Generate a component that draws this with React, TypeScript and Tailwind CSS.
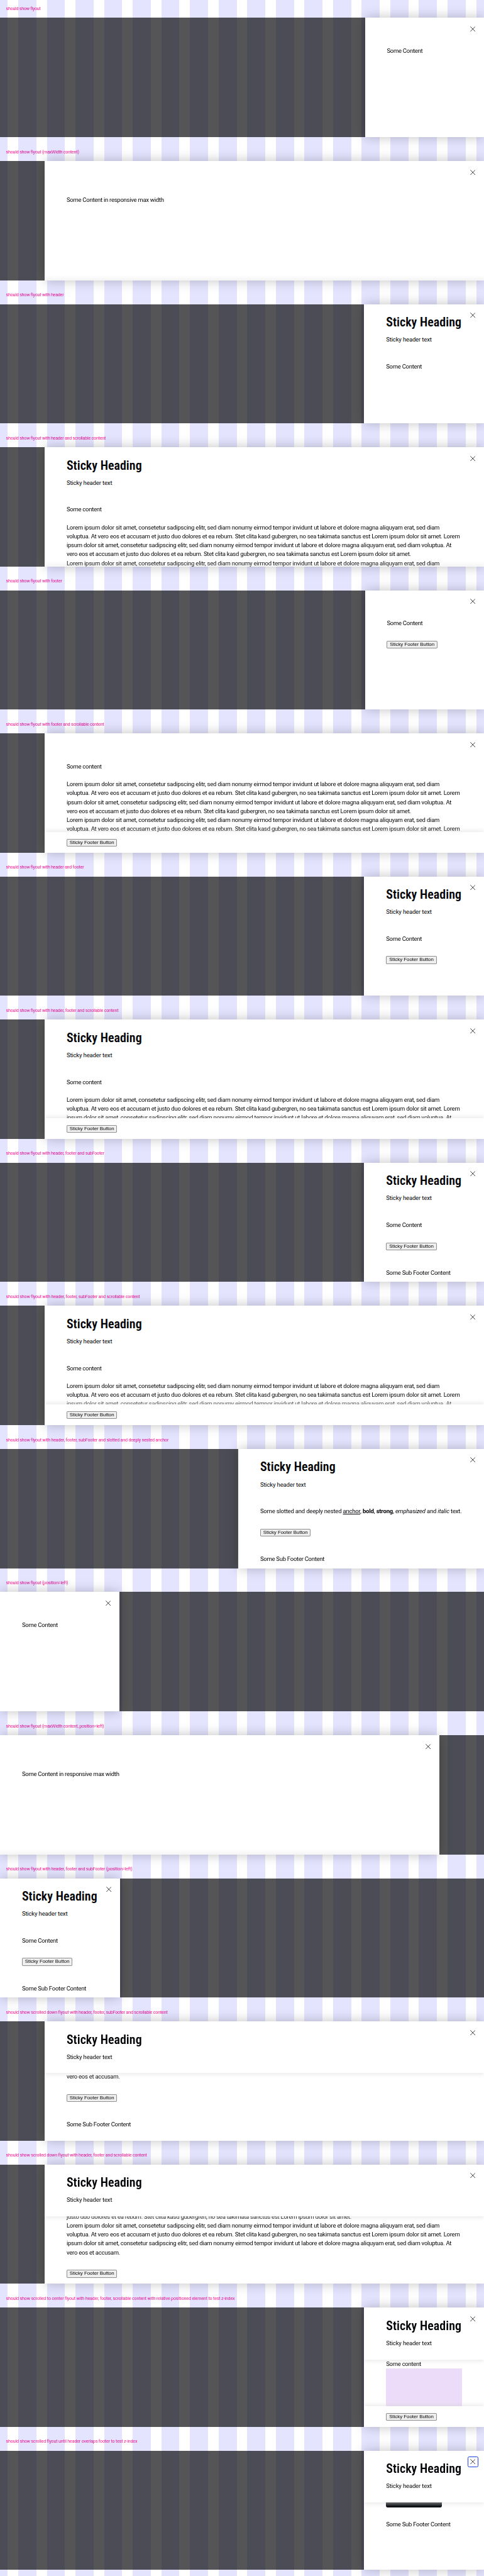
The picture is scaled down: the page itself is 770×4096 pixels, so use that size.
import type { ReactNode } from "react";

type FlyoutProps = {
  label: string;
  labelTracking?: string;
  side?: "left" | "right";
  width: string;
  header?: boolean;
  headerShadow?: boolean;
  footer?: boolean;
  bottomFade?: boolean;
  focused?: boolean;
  children: ReactNode;
};

const LINE_1 =
  "Lorem ipsum dolor sit amet, consetetur sadipscing elitr, sed diam nonumy eirmod tempor invidunt ut labore et dolore magna aliquyam erat, sed diam";
const LINE_2 =
  "voluptua. At vero eos et accusam et justo duo dolores et ea rebum. Stet clita kasd gubergren, no sea takimata sanctus est Lorem ipsum dolor sit amet. Lorem";
const LINE_3 =
  "ipsum dolor sit amet, consetetur sadipscing elitr, sed diam nonumy eirmod tempor invidunt ut labore et dolore magna aliquyam erat, sed diam voluptua. At";
const LINE_4 =
  "vero eos et accusam et justo duo dolores et ea rebum. Stet clita kasd gubergren, no sea takimata sanctus est Lorem ipsum dolor sit amet.";

function Close({ focused }: { focused?: boolean }) {
  return (
    <button
      aria-label="Close"
      className={
        "absolute top-[9.48px] right-[9.48px] z-20 flex size-[16.6px] items-center justify-center rounded-[2.4px] " +
        (focused ? "outline-[1.2px] -outline-offset-[1.2px] outline-[#1a44ea]" : "")
      }
    >
      <svg viewBox="0 0 14 14" className="size-[8.4px] shrink-0">
        <path d="M.5.5l13 13M13.5.5l-13 13" stroke="#010205" strokeWidth="1.25" fill="none" />
      </svg>
    </button>
  );
}

function FooterButton() {
  return (
    <button className="block h-[12.4px] w-[80.6px] rounded-[1.8px] border border-[#767676]/80 bg-[#efefef] text-center font-['Liberation_Sans',sans-serif] text-[7.9px] leading-[10.6px] font-normal tracking-[-0.015px] whitespace-nowrap text-black">
      Sticky Footer Button
    </button>
  );
}

function Header({ shadow }: { shadow?: boolean }) {
  return (
    <div
      className={
        "relative z-10 h-[82.37px] shrink-0 bg-white pt-[17.5px] pl-[34.9px] " +
        (shadow ? "shadow-[0_3px_6px_rgba(204,204,204,0.35)]" : "")
      }
    >
      <h2 className="text-[19.9px] leading-[23.7px] font-semibold tracking-[0.05px] [font-stretch:75%]">
        Sticky Heading
      </h2>
      <p className="mt-[8.4px] tracking-[-0.13px]">Sticky header text</p>
    </div>
  );
}

function SubFooter() {
  return <p className="mt-[28.9px]">Some Sub Footer Content</p>;
}

function Footer() {
  return (
    <div className="mt-[20.3px]">
      <FooterButton />
    </div>
  );
}

function Lorem({ lines }: { lines: string[] }) {
  return (
    <div>
      {lines.map((line, i) => (
        <p key={i} className={line === LINE_1 ? "tracking-[-0.203px]" : "tracking-[-0.222px]"}>
          {line}
        </p>
      ))}
    </div>
  );
}

function Flyout({
  label,
  labelTracking = "tracking-[-0.215px]",
  side = "right",
  width,
  header,
  headerShadow,
  footer,
  bottomFade,
  focused,
  children,
}: FlyoutProps) {
  return (
    <section className="h-[227.556px] shrink-0">
      <div className="flex h-[28.444px] items-center pl-[9.6px]">
        <p
          className={
            "relative z-10 text-[7.11px] whitespace-nowrap text-[#ff1493] mix-blend-multiply " + labelTracking
          }
        >
          {label}
        </p>
      </div>
      <div className={"flex h-[189.63px] bg-[#010205]/67 " + (side === "right" ? "justify-end" : "justify-start")}>
        <div className={"relative flex h-full flex-col bg-white shadow-[0_0_18px_rgba(0,0,0,0.25)] " + width}>
          <Close focused={focused} />
          <div className="flex h-full flex-col overflow-hidden">
            {header && <Header shadow={headerShadow} />}
            <div
              className={
                "min-h-0 flex-1 pl-[34.9px] " +
                (header ? (headerShadow ? "" : "pt-[9.9px]") : "pt-[45.6px]")
              }
            >
              {children}
            </div>
            {footer && (
              <div className="relative h-[33.2px] shrink-0 bg-white pt-[11.3px] pl-[34.9px] shadow-[0_-3px_6px_rgba(204,204,204,0.35)]">
                <FooterButton />
              </div>
            )}
            {bottomFade && <div className="relative h-0 shrink-0 shadow-[0_-1px_6px_2px_rgba(204,204,204,0.35)]" />}
          </div>
        </div>
      </div>
    </section>
  );
}

const SMALL = "w-[189.5px]";
const HEADED = "w-[190.7px]";
const WIDE = "w-[699px]";

export default function App() {
  return (
    <div className="flex h-[4096px] w-[770px] flex-col overflow-hidden bg-[repeating-linear-gradient(90deg,#e4e4ff_0px,#e4e4ff_12.29px,#ffffff_12.29px,#ffffff_29.02px,#e4e4ff_29.02px,#e4e4ff_45.534px)] font-[Roboto,sans-serif] text-[9.48px] leading-[14.222px] tracking-[-0.25px] whitespace-nowrap text-[#010205]">
      <Flyout label="should show flyout" labelTracking="tracking-[-0.26px]" width={SMALL}>
        <p>Some Content</p>
      </Flyout>

      <Flyout label="should show flyout (maxWidth content)" width={WIDE} bottomFade>
        <p className="mt-[9.5px]">Some Content in responsive max width</p>
      </Flyout>

      <Flyout label="should show flyout with header" width={HEADED} header>
        <p>Some Content</p>
      </Flyout>

      <Flyout label="should show flyout with header and scrollable content" width={WIDE} header bottomFade>
        <p className="mb-[14.22px]">Some content</p>
        <Lorem lines={[LINE_1, LINE_2, LINE_3, LINE_4, LINE_1]} />
      </Flyout>

      <Flyout label="should show flyout with footer" width={SMALL}>
        <p>Some Content</p>
        <Footer />
      </Flyout>

      <Flyout label="should show flyout with footer and scrollable content" width={WIDE} footer>
        <p className="mb-[14.22px]">Some content</p>
        <Lorem lines={[LINE_1, LINE_2, LINE_3, LINE_4, LINE_1, LINE_2]} />
      </Flyout>

      <Flyout label="should show flyout with header and footer" width={HEADED} header>
        <p>Some Content</p>
        <Footer />
      </Flyout>

      <Flyout label="should show flyout with header, footer and scrollable content" width={WIDE} header footer>
        <p className="mb-[14.22px]">Some content</p>
        <Lorem lines={[LINE_1, LINE_2, LINE_3]} />
      </Flyout>

      <Flyout label="should show flyout with header, footer and subFooter" width={HEADED} header>
        <p>Some Content</p>
        <Footer />
        <SubFooter />
      </Flyout>

      <Flyout
        label="should show flyout with header, footer, subFooter and scrollable content"
        labelTracking="tracking-[-0.19px]"
        width={WIDE}
        header
        footer
      >
        <p className="mb-[14.22px]">Some content</p>
        <Lorem lines={[LINE_1, LINE_2]} />
        <div className="opacity-75">
          <Lorem lines={[LINE_3]} />
        </div>
      </Flyout>

      <Flyout
        label="should show flyout with header, footer, subFooter and slotted and deeply nested anchor"
        labelTracking="tracking-[-0.19px]"
        width="w-[391px]"
        header
      >
        <p className="tracking-[-0.175px]">
          Some slotted and deeply nested <a className="underline">anchor</a>, <b className="font-bold">bold</b>,{" "}
          <strong className="font-bold">strong</strong>, <em>emphasized</em> and <i>italic</i> text.
        </p>
        <Footer />
        <SubFooter />
      </Flyout>

      <Flyout label="should show flyout (position=left)" side="left" width={SMALL}>
        <p>Some Content</p>
      </Flyout>

      <Flyout
        label="should show flyout (maxWidth content, position=left)"
        side="left"
        width={WIDE}
        bottomFade
      >
        <p className="mt-[9.5px]">Some Content in responsive max width</p>
      </Flyout>

      <Flyout
        label="should show flyout with header, footer and subFooter (position=left)"
        labelTracking="tracking-[-0.19px]"
        side="left"
        width={HEADED}
        header
      >
        <p>Some Content</p>
        <Footer />
        <SubFooter />
      </Flyout>

      <Flyout
        label="should show scrolled down flyout with header, footer, subFooter and scrollable content"
        labelTracking="tracking-[-0.18px]"
        width={WIDE}
        header
        headerShadow
      >
        <p className="-mt-[1.2px]">vero eos et accusam.</p>
        <Footer />
        <SubFooter />
      </Flyout>

      <Flyout
        label="should show scrolled down flyout with header, footer and scrollable content"
        labelTracking="tracking-[-0.18px]"
        width={WIDE}
        header
        headerShadow
      >
        <div className="-mt-[6.2px]">
          <Lorem
            lines={[
              "justo duo dolores et ea rebum. Stet clita kasd gubergren, no sea takimata sanctus est Lorem ipsum dolor sit amet.",
              LINE_1,
              LINE_2,
              LINE_3,
              "vero eos et accusam.",
            ]}
          />
        </div>
        <Footer />
      </Flyout>

      <Flyout
        label="should show scrolled to center flyout with header, footer, scrollable content with relative positioned element to test z-index"
        labelTracking="tracking-[-0.16px]"
        width={HEADED}
        header
        headerShadow
        footer
      >
        <p className="mt-[0.3px]">Some content</p>
        <div className="h-[60px] w-[121px] bg-[#ecdcf9]" />
      </Flyout>

      <Flyout
        label="should show scrolled flyout until header overlaps footer to test z-index"
        labelTracking="tracking-[-0.17px]"
        width={HEADED}
        header
        headerShadow
        focused
      >
        <div className="h-[8.2px] w-[88.3px] rounded-b-[2.4px] bg-linear-to-b from-[#3d3f3e] to-[#010205]" />
        <p className="mt-[19.4px]">Some Sub Footer Content</p>
      </Flyout>
    </div>
  );
}
